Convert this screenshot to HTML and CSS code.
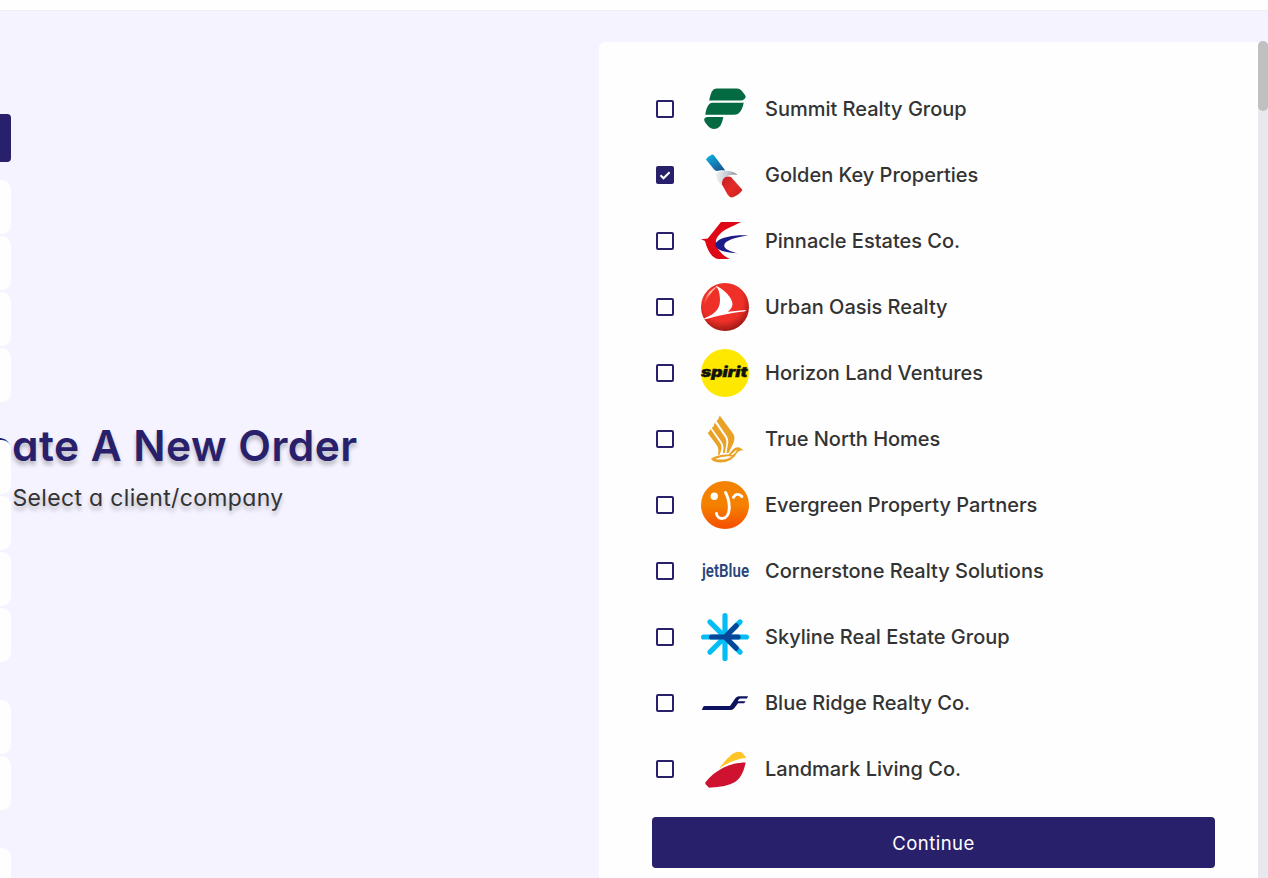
FILE: index.html
```html
<!DOCTYPE html>
<html lang="en">
<head>
<meta charset="utf-8">
<title>Create A New Order</title>
<link rel="stylesheet" href="styles.css">
</head>
<body>
<header class="topbar"></header>
<div class="shell">
  <nav class="sidebar">
    <div class="side-active"></div>
    <div class="side-group"><i></i><i></i><i></i><i></i></div>
    <div class="side-group"><i></i><i></i><i></i><i></i></div>
    <div class="side-group"><i></i><i></i></div>
    <div class="side-group"><i></i></div>
  </nav>
  <section class="intro">
    <h1 class="title">Create A New Order</h1>
    <p class="subtitle">Select a client/company</p>
  </section>
  <main class="panel">
    <div class="list">
      <label class="row"><span class="box"></span>
        <svg class="logo" viewBox="0 0 48 48"><g fill="#046a42"><path d="M8.2 15.6C9 11 10 7 12.500 4.600Q14 3.500 16 3.500H36Q38.500 3.500 40.500 5.600L44 10Q45.500 12 44 13.400Q42 15.600 39 15.600Z"/><path d="M4.200 29.700C5 25 6 21.500 8.300 19Q9.500 17.800 12 17.800H42.700C42 22 40.500 26 37.500 28.500Q35.500 29.700 33 29.700Z"/><path d="M6 32H22.300C21.700 35 21 38 19.500 40.500Q17 44 12.500 44Q8.500 43.500 5 38.500C2.500 35 2.500 33 6 32Z"/></g></svg>
        <span class="name">Summit Realty Group</span></label>
      <label class="row"><span class="box checked"><svg viewBox="0 0 18 18"><path d="M4.500 9.300L7.500 12.300L13.600 6.200"/></svg></span>
        <svg class="logo" viewBox="0 0 48 48"><defs><linearGradient id="sky" x1="0" y1="0" x2=".7" y2="1"><stop stop-color="#0bb4e8"/><stop offset="1" stop-color="#175a92"/></linearGradient><linearGradient id="silver"><stop stop-color="#edf1f4"/><stop offset=".5" stop-color="#c8ced6"/><stop offset="1" stop-color="#8a939d"/></linearGradient><linearGradient id="redtail" x2="1" y2="1"><stop stop-color="#c02026"/><stop offset=".5" stop-color="#e52b28"/><stop offset="1" stop-color="#c9211e"/></linearGradient></defs><path d="M5 8.500Q7 5.500 11 3.600Q12.500 3.600 13.500 5L24.300 19.500Q20.500 18.800 15.500 20Q14 19.800 12.500 17.800Z" fill="url(#sky)"/><path d="M15 22.500Q19 19.500 27 20Q34 20.500 36.500 24Q28 23 23.500 27Q20 30 20.800 34.500Q14 28 15 22.500Z" fill="url(#silver)"/><path d="M21 33.500Q20.500 28 25 25.800Q27.500 25 30 26L41.500 39Q37.500 44.500 31 46.500Q28.500 46.500 26.500 43.500Z" fill="url(#redtail)"/></svg>
        <span class="name">Golden Key Properties</span></label>
      <label class="row"><span class="box"></span>
        <svg class="logo" viewBox="0 0 48 48"><path d="M20 5H40L33 8.500C24 12 17 17 15 23C14 30 20 38 29 42H17C11 41 6.500 34 4 24L0 22.300L6.800 21.500Z" fill="#df0615"/><path d="M47.500 18.300C36 17.500 15 19.500 14.400 28C14.500 33 25 36 37 36.300C29 34.500 23.500 32 23.200 28.700C23 24 33 20.500 47.500 18.300Z" fill="#1d1b87"/></svg>
        <span class="name">Pinnacle Estates Co.</span></label>
      <label class="row"><span class="box"></span>
        <svg class="logo" viewBox="0 0 48 48"><defs><radialGradient id="ball" cx=".45" cy=".38" r=".65"><stop offset=".65" stop-color="#ef3028"/><stop offset="1" stop-color="#931713"/></radialGradient><linearGradient id="shine" x1="0" y1="1" x2="1" y2="0"><stop stop-color="#f5604a" stop-opacity="0"/><stop offset=".6" stop-color="#ffc2aa"/></linearGradient></defs><circle cx="24" cy="24" r="24" fill="url(#ball)"/><path d="M2.500 25Q3 9 17 3Q6 12 2.500 25Z" fill="url(#shine)"/><path d="M14.300 2.500C23 6 31.500 15 31.500 21Q31.500 25 26.700 28.800L44.500 27Q46 27.300 43.300 28.500C30 29.600 15 33.300 4 36.300Q2 36 4.500 34.700C14 31 19 26 19 17C19 10 17.500 5.500 14.300 2.500Z" fill="#fff"/></svg>
        <span class="name">Urban Oasis Realty</span></label>
      <label class="row"><span class="box"></span>
        <svg class="logo" viewBox="0 0 48 48"><circle cx="24" cy="24" r="24" fill="#ffe800"/><text class="word-spirit" x="0" y="27.500" textLength="46.500" lengthAdjust="spacingAndGlyphs">spirit</text></svg>
        <span class="name">Horizon Land Ventures</span></label>
      <label class="row"><span class="box"></span>
        <svg class="logo" viewBox="0 0 48 48"><g fill="#e9a126"><path d="M18.700 .5L32 18.500Q35 23 32 29L27.500 38H25.500L27 29Q28 24 25 20L15.500 6Q18 4 18.700 .5Z"/><path d="M13.800 7.500L24.500 23Q26 26 25.200 30L23.800 38H22L22.500 32Q22.300 29 20 26L10.800 13Q13.500 11 13.800 7.500Z"/><path d="M9.500 14L18.800 27.500Q21.500 31 20 36L18.500 39.500L16.800 40L17.500 36Q17.500 33 16 30.500L6.700 18Q9 16.500 9.500 14Z"/><path d="M10 43.500Q18 39 27.500 39.500L31.500 35Q34 31.500 38.500 32.500L43 35.500Q38 34.500 36 38Q31 47.500 19 47.500Q11 47 10 43.500ZM14 44Q25 46 31 41.500Q22 40.500 14 44ZM33.500 36.500L29.500 40H31.500Q34.500 38.500 36 35Q34.500 35 33.500 36.500Z" fill-rule="evenodd"/></g></svg>
        <span class="name">True North Homes</span></label>
      <label class="row"><span class="box"></span>
        <svg class="logo" viewBox="0 0 48 48"><defs><linearGradient id="orange" x2="0" y2="1"><stop offset=".5" stop-color="#f48200"/><stop offset=".95" stop-color="#f55200"/></linearGradient></defs><circle cx="24" cy="24" r="24" fill="url(#orange)"/><circle cx="13.300" cy="15.300" r="3.700" fill="#fff"/><path d="M24.500 11.500C28 18 28.500 23 28.200 28C27.500 40 16 39.500 15.500 32.500M32.500 16.300C34.500 12.500 38.500 12.500 40.800 15.500" fill="none" stroke="#fff" stroke-width="2.900" stroke-linecap="round"/></svg>
        <span class="name">Evergreen Property Partners</span></label>
      <label class="row"><span class="box"></span>
        <svg class="logo" viewBox="0 0 48 48"><text class="word-jet" x="1" y="29.500" textLength="47" lengthAdjust="spacingAndGlyphs">jetBlue</text></svg>
        <span class="name">Cornerstone Realty Solutions</span></label>
      <label class="row"><span class="box"></span>
        <svg class="logo" viewBox="0 0 48 48"><g fill="none" stroke-width="5.200" stroke-linecap="round"><path d="M24 2.600V45.400M2.600 24H45.400M8.900 8.900L24 24L8.900 39.100M39.100 8.900L24 24L39.100 39.100" stroke="#05bdf5"/><path d="M10.500 24H37M35.200 12.800L24 24L35.200 35.200" stroke="#07479a"/></g></svg>
        <span class="name">Skyline Real Estate Group</span></label>
      <label class="row"><span class="box"></span>
        <svg class="logo" viewBox="0 0 48 48"><path d="M4 27H29L34.500 19Q36 17.300 38 17.300H47L46 19.500H39.500Q38 19.500 37.300 21L36.800 22.200H44.500L43.200 24.300H37L33 29.500Q31.500 31 29 31H.8L2 28.200Q2.500 27 4 27Z" fill="#0d1260"/></svg>
        <span class="name">Blue Ridge Realty Co.</span></label>
      <label class="row"><span class="box"></span>
        <svg class="logo" viewBox="0 0 48 48"><path d="M18 23.500C23 17.500 29 9 35.500 7Q40 6 42 8.500L45.300 13C36 13.500 26 18 18 23.500Z" fill="#ffc426"/><path d="M4.300 37.500C14 25 29 17.500 44.700 17.500C43 25 40.500 33 34 37Q26 42 8 42.700L4.800 39.500Q4 38.500 4.300 37.500Z" fill="#ce1230"/></svg>
        <span class="name">Landmark Living Co.</span></label>
    </div>
    <button class="continue">Continue</button>
  </main>
  <div class="scroll"><div class="thumb"></div></div>
</div>
</body>
</html>
```
FILE: styles.css
```css
* { box-sizing: border-box; }
body {
  margin: 0;
  height: 878px;
  overflow: hidden;
  background: #f5f3ff;
  font-family: Inter, "Liberation Sans", sans-serif;
  color: #333;
}
.topbar { height: 11px; background: #fefefe; border-bottom: 1px solid #efeef2; }
.shell { display: flex; height: 867px; }

.sidebar {
  flex: 0 0 11px;
  position: relative;
  z-index: 1;
  display: flex;
  flex-direction: column;
  gap: 38px;
  padding-top: 103px;
}
.side-active { flex: none; height: 48px; margin-bottom: -20px; background: #29206b; border-radius: 0 4px 4px 0; }
.side-group { flex: none; display: grid; gap: 2px; }
.side-group i { height: 54px; background: #fefefe; border-radius: 0 9px 9px 0; }

.intro {
  flex: 0 0 902px;
  margin-left: -314px;
  padding-top: 405px;
  text-align: center;
  font-feature-settings: "cv11";
}
.title {
  margin: 0;
  font-size: 42.500px;
  line-height: 60px;
  font-weight: 600;
  letter-spacing: .45px;
  white-space: nowrap;
  color: #29206b;
  text-shadow: 0 4px 4px rgba(0, 0, 0, .25);
}
.subtitle {
  margin: 4px 0 0;
  font-size: 23px;
  line-height: 36px;
  letter-spacing: .33px;
  text-shadow: 0 4px 4px rgba(0, 0, 0, .25);
}

.panel {
  flex: 0 0 659px;
  margin-top: 31px;
  padding: 34px 43px 0 53px;
  background: #fefefe;
  border-radius: 6px 0 0 0;
}
.list { padding-left: 4px; }
.row { display: flex; align-items: center; height: 66px; }
.box { width: 18px; height: 18px; border: 2px solid #29206b; border-radius: 2px; }
.checked { border: 0; background: #29206b; }
.checked svg { display: block; fill: none; stroke: #fff; stroke-width: 2; }
.logo { width: 48px; height: 48px; margin: 0 16px 0 27px; overflow: visible; }
.name { font-size: 20px; font-weight: 500; letter-spacing: -.01px; white-space: nowrap; }
.word-spirit { font: italic 900 14px Inter, sans-serif; fill: #111; stroke: #111; stroke-width: .4px; }
.word-jet { font: 600 18.500px Roboto, sans-serif; fill: #294579; }
.continue {
  display: block;
  width: 563px;
  height: 51px;
  margin-top: 15px;
  border: 0;
  border-radius: 4px;
  background: #29206b;
  color: #fff;
  font: 400 18.500px Inter, sans-serif;
  letter-spacing: .5px;
  font-feature-settings: "cv11";
}
.scroll { flex: 0 0 10px; margin-top: 30px; background: #e9e8ef; border-radius: 5px 5px 0 0; }
.thumb { height: 70px; border-radius: 5px; background: #c0c0c0; }
```
